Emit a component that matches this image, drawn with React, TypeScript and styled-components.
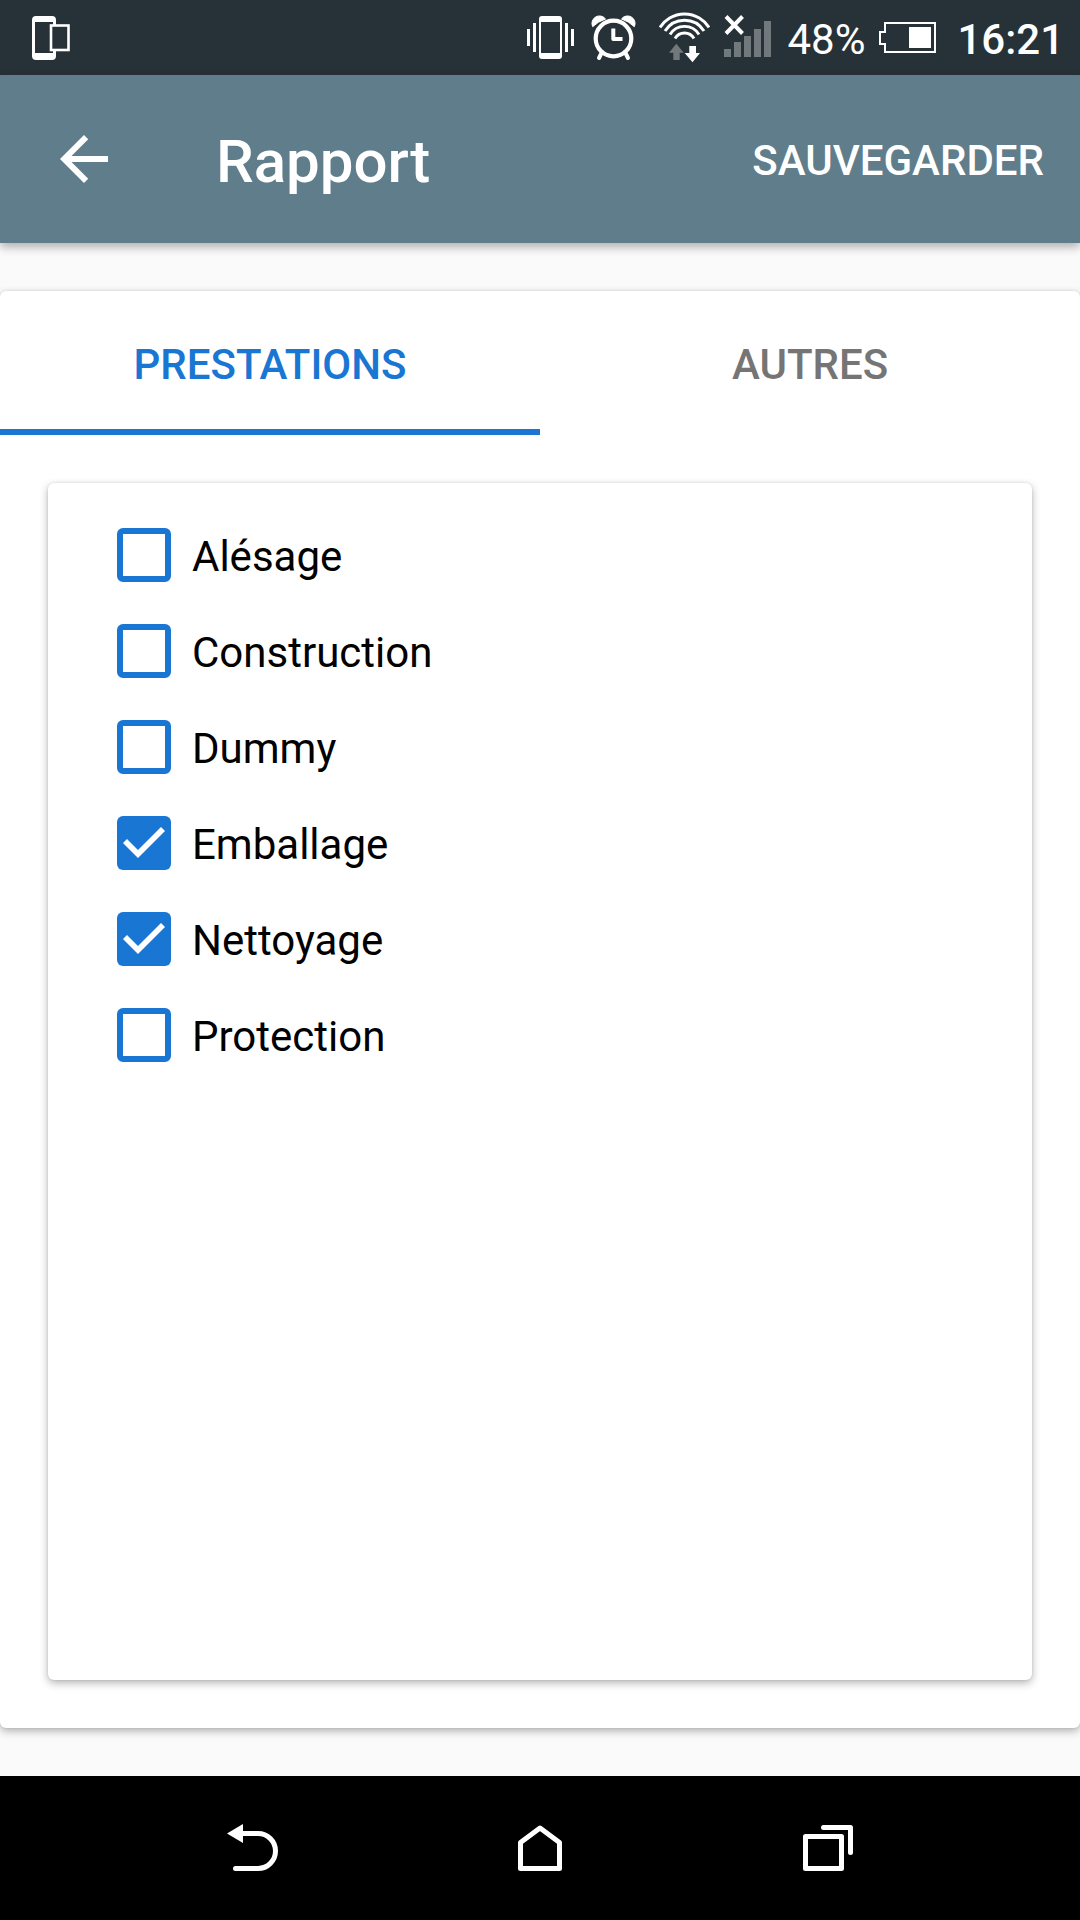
import React, { useState } from "react";
import styled, { createGlobalStyle } from "styled-components";

const GlobalStyle = createGlobalStyle`
  *, *::before, *::after { box-sizing: border-box; }
  body { margin: 0; background: #fafafa; }
  body, button, input { font-family: Roboto, "Noto Sans", sans-serif; }
  button { border: 0; background: none; padding: 0; color: inherit; cursor: pointer; }
`;

const Screen = styled.div`
  display: flex;
  flex-direction: column;
  min-height: 100vh;
  font-size: 42px;
  line-height: 48px;
`;

const StatusBar = styled.div`
  display: flex;
  align-items: center;
  justify-content: space-between;
  height: 75px;
  padding: 0 16px 0 32px;
  background: #273238;
  color: #fff;
`;

const StatusGroup = styled.div`
  display: flex;
  align-items: center;
  gap: 14px;
`;

const StatusText = styled.span<{ $strong?: boolean }>`
  padding-top: 4px;
  font-weight: ${(p) => (p.$strong ? 500 : 400)};
`;

const Icon = styled.svg`
  display: block;
  flex: none;
`;

const AppBar = styled.header`
  display: flex;
  align-items: center;
  height: 168px;
  padding: 0 36px 0 48px;
  background: #607d8b;
  color: #fff;
  box-shadow: 0 4px 9px rgba(0, 0, 0, 0.3);
`;

const BackButton = styled.button`
  width: 72px;
  height: 72px;
  margin-right: 96px;
`;

const Title = styled.h1`
  flex: 1;
  margin: 0;
  padding-top: 6px;
  font-size: 60px;
  line-height: 72px;
  font-weight: 500;
`;

const SaveButton = styled.button`
  padding-top: 4px;
  font-size: 42px;
  line-height: 48px;
  font-weight: 500;
  text-transform: uppercase;
`;

const Card = styled.section`
  display: flex;
  flex-direction: column;
  flex: 1;
  border-radius: 6px;
  background: #fff;
  box-shadow: 0 3px 8px rgba(0, 0, 0, 0.3), 0 0 2px rgba(0, 0, 0, 0.12);
`;

const Main = styled.main`
  display: flex;
  flex-direction: column;
  flex: 1;
  padding: 48px 0;
`;

const Tabs = styled.div`
  display: flex;
`;

const Tab = styled.button<{ $active: boolean }>`
  flex: 1;
  height: 144px;
  padding-top: 10px;
  border-bottom: 6px solid ${(p) => (p.$active ? "#1976d2" : "transparent")};
  color: ${(p) => (p.$active ? "#1976d2" : "#757575")};
  font-size: 42px;
  line-height: 48px;
  font-weight: 500;
  text-transform: uppercase;
`;

const Panel = styled.div`
  display: flex;
  flex-direction: column;
  flex: 1;
  padding: 48px;
`;

const OptionCard = styled(Card)`
  padding: 24px 69px;
`;

const Option = styled.label`
  display: flex;
  align-items: center;
  gap: 21px;
  height: 96px;
  color: #000;
`;

const OptionText = styled.span`
  padding-top: 4px;
`;

const Checkbox = styled.input`
  appearance: none;
  flex: none;
  width: 54px;
  height: 54px;
  margin: 0;
  border: 6px solid #1976d2;
  border-radius: 6px;
  background: #fff;

  &:checked {
    border: 0;
    background: #1976d2;
  }

  &:checked::before {
    content: "";
    display: block;
    width: 54px;
    height: 54px;
    background: #fff;
    clip-path: polygon(21px 42px, 6px 27px, 10px 23px, 21px 34px, 44px 11px, 48px 15px);
  }
`;

const NavBar = styled.nav`
  display: flex;
  height: 144px;
  padding: 0 10%;
  background: #000;
  color: #fff;
`;

const NavButton = styled.button`
  display: flex;
  flex: 1;
  align-items: center;
  justify-content: center;
`;

const PhoneIcon = () => (
  <Icon width="38" height="51" viewBox="0 0 38 51" aria-hidden="true">
    <path
      fill="#fff"
      fillRule="evenodd"
      d="M4 4H20Q24 4 24 8V44Q24 48 20 48H4Q0 48 0 44V8Q0 4 4 4ZM3 10V41H21V10Z"
    />
    <rect x="19" y="13.5" width="17.5" height="24.5" fill="#273238" stroke="#fff" strokeWidth="2.6" />
  </Icon>
);

const VibrateIcon = () => (
  <Icon width="49" height="51" viewBox="0 0 49 51" fill="#fff" aria-hidden="true">
    <path d="M0 17h3v17H0zM6 11h3v29H6zM38 11h3v29h-3zM44 17h3v17h-3z" />
    <path
      fillRule="evenodd"
      d="M15 4H32Q35 4 35 7V44Q35 47 32 47H15Q12 47 12 44V7Q12 4 15 4ZM14 10V41H33V10Z"
    />
  </Icon>
);

const AlarmIcon = () => (
  <Icon width="55" height="51" viewBox="0 0 55 51" fill="none" stroke="#fff" aria-hidden="true">
    <circle cx="23.5" cy="26.5" r="17.8" strokeWidth="4.2" />
    <path d="M23.3 16.5V27H32.5" strokeWidth="4" strokeLinejoin="round" />
    <path d="M12 40L9 46M35 40L38 46" strokeWidth="4" strokeLinecap="round" />
    <path
      d="M2.7 14.7A7.5 7.5 0 0 1 15.5 7Q8 9.5 2.7 14.7ZM44.3 14.7A7.5 7.5 0 0 0 31.5 7Q39 9.5 44.3 14.7Z"
      fill="#fff"
      strokeWidth="1"
      strokeLinejoin="round"
    />
  </Icon>
);

const WifiIcon = () => (
  <Icon width="51" height="51" viewBox="0 0 51 51" fill="none" aria-hidden="true">
    <path
      stroke="#fff"
      strokeWidth="2.9"
      d="M1 15.5A29 29 0 0 1 50 15.5M6 19A23 23 0 0 1 45 19M11 22.5A17 17 0 0 1 40 22.5M16 26.5A11 11 0 0 1 35 26.5"
    />
    <path fill="#72797d" d="M17.3 31.7L24.7 40.7H20.7V48H14.3V40.7H10Z" />
    <path fill="#fff" d="M30.3 34H37V41H41L33.5 50.3L25.7 41H30.3Z" />
  </Icon>
);

const SignalIcon = () => (
  <Icon width="49" height="51" viewBox="0 0 49 51" aria-hidden="true">
    <path fill="#72797d" d="M0 37h7v8H0zM10 30h7v15h-7zM20 24h7v21h-7zM30 17h7v28h-7zM40 9h7v36h-7z" />
    <path stroke="#fff" strokeWidth="4" d="M2 4.5L18.5 21.5M18.5 4.5L2 21.5" />
  </Icon>
);

const BatteryIcon = () => (
  <Icon width="64" height="51" viewBox="0 0 64 51" aria-hidden="true">
    <path fill="none" stroke="#fff" strokeWidth="2" d="M6 11H56V40H6V32H1V20H6Z" />
    <rect x="30" y="15" width="22" height="21" fill="#fff" />
  </Icon>
);

const NavIcon = ({ children }: { children: React.ReactNode }) => (
  <Icon
    width="72"
    height="72"
    viewBox="0 0 72 72"
    fill="none"
    stroke="currentColor"
    strokeWidth="5"
    strokeLinecap="round"
    strokeLinejoin="round"
    aria-hidden="true"
  >
    {children}
  </Icon>
);

const services = ["Alésage", "Construction", "Dummy", "Emballage", "Nettoyage", "Protection"];
const tabs = ["Prestations", "Autres"];

export default function App() {
  const [tab, setTab] = useState(tabs[0]);
  const [selected, setSelected] = useState<string[]>(["Emballage", "Nettoyage"]);

  const toggle = (name: string) =>
    setSelected((list) => (list.includes(name) ? list.filter((n) => n !== name) : [...list, name]));

  return (
    <Screen>
      <GlobalStyle />
      <StatusBar>
        <PhoneIcon />
        <StatusGroup>
          <VibrateIcon />
          <AlarmIcon />
          <WifiIcon />
          <SignalIcon />
          <StatusText>48%</StatusText>
          <BatteryIcon />
          <StatusText $strong>16:21</StatusText>
        </StatusGroup>
      </StatusBar>

      <AppBar>
        <BackButton type="button" aria-label="Retour">
          <Icon width="72" height="72" viewBox="0 0 24 24" fill="currentColor" aria-hidden="true">
            <path d="M20 11H7.83l5.59-5.59L12 4l-8 8 8 8 1.41-1.41L7.83 13H20v-2z" />
          </Icon>
        </BackButton>
        <Title>Rapport</Title>
        <SaveButton type="button">Sauvegarder</SaveButton>
      </AppBar>

      <Main>
        <Card>
          <Tabs role="tablist">
            {tabs.map((name) => (
              <Tab
                key={name}
                type="button"
                role="tab"
                aria-selected={tab === name}
                $active={tab === name}
                onClick={() => setTab(name)}
              >
                {name}
              </Tab>
            ))}
          </Tabs>
          <Panel role="tabpanel">
            <OptionCard>
              {tab === tabs[0] &&
                services.map((name) => (
                  <Option key={name}>
                    <Checkbox
                      type="checkbox"
                      checked={selected.includes(name)}
                      onChange={() => toggle(name)}
                    />
                    <OptionText>{name}</OptionText>
                  </Option>
                ))}
            </OptionCard>
          </Panel>
        </Card>
      </Main>

      <NavBar>
        <NavButton type="button" aria-label="Précédent">
          <NavIcon>
            <path d="M27 21.5H42a17.5 17.5 0 0 1 0 35H19.5" />
            <path d="M11 21.5L27 12V31Z" fill="currentColor" stroke="none" />
          </NavIcon>
        </NavButton>
        <NavButton type="button" aria-label="Accueil">
          <NavIcon>
            <path d="M16.5 56.5V30.5L36 16L55.5 30.5V56.5Z" />
          </NavIcon>
        </NavButton>
        <NavButton type="button" aria-label="Applications récentes">
          <NavIcon>
            <path d="M13.5 24.5H49.5V56.5H13.5ZM31.5 15.5H58.5V40.5" />
          </NavIcon>
        </NavButton>
      </NavBar>
    </Screen>
  );
}
